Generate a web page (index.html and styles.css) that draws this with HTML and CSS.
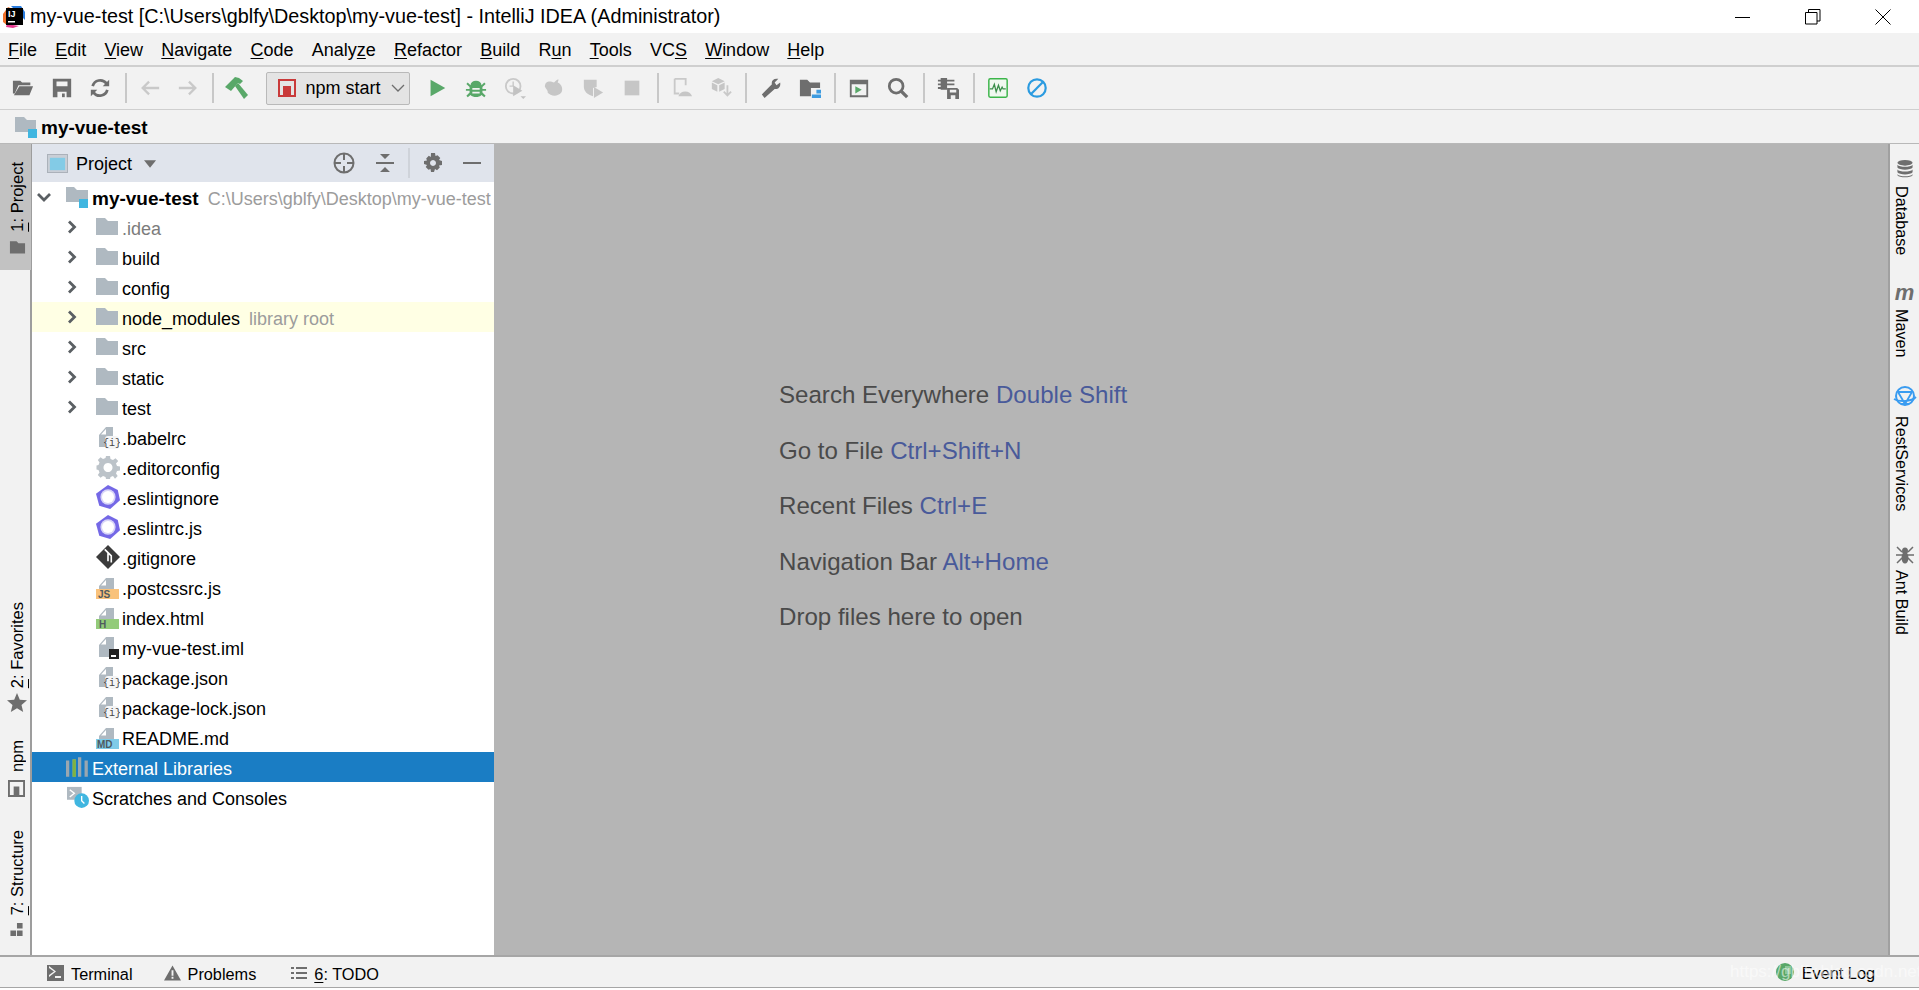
FILE: index.html
```html
<!DOCTYPE html>
<html lang="en">
<head>
<meta charset="utf-8">
<title>my-vue-test - IntelliJ IDEA</title>
<link rel="stylesheet" href="styles.css">
</head>
<body>
<svg class="defs" width="0" height="0">
  <symbol id="folder" viewBox="0 0 22 18"><path d="M0 1h9l3 3h10v14H0z" fill="#afb9c1"/></symbol>
  <symbol id="jsonfile" viewBox="0 0 24 24"><path d="M3 10 10 2h7v20H3z" fill="#afb9c1"/><path d="M5 9.500 10 4v5.500z" fill="#fff"/><rect x="9" y="11" width="14" height="13" rx="3" fill="#f4f5f6"/><text x="16" y="21" class="brace">{i}</text></symbol>
  <symbol id="eslint" viewBox="0 0 22 22"><path d="M11 0 20 4.500 22 14 13 22 3 19 0 8z" fill="#7468e6"/><circle cx="11" cy="11" r="7" fill="#d7d4f7"/><circle cx="11" cy="11" r="5.500" fill="#fff"/></symbol>
  <symbol id="badgefile" viewBox="0 0 24 24"><path d="M3 10 10 2h8v20H3z" fill="#afb9c1"/><path d="M5 9.500 10 4v5.500z" fill="#fff"/></symbol>
  <symbol id="chev" viewBox="0 0 10 14"><path d="M2 1.500 7.500 7 2 12.500" fill="none" stroke="#5a5f63" stroke-width="2.800"/></symbol>
</svg>

<header class="titlebar">
  <svg class="app-logo" viewBox="0 0 22 22"><path d="M0 8 5 1 12 4 5 20 0 16z" fill="#f0712c"/><path d="M8 0h10l4 6v8z" fill="#2a7de0"/><path d="M4 18 16 20 10 22 3 21z" fill="#e6388f"/><rect x="3" y="2" width="17" height="17" fill="#000"/><text x="5" y="11" class="logo-text">IJ</text><rect x="5" y="15" width="7" height="1.500" fill="#fff"/></svg>
  <span class="title-text">my-vue-test [C:\Users\gblfy\Desktop\my-vue-test] - IntelliJ IDEA (Administrator)</span>
  <div class="win-controls">
    <svg class="win-btn" viewBox="0 0 16 16"><path d="M0 8.500h15" stroke="#000" fill="none"/></svg>
    <svg class="win-btn" viewBox="0 0 16 16"><path d="M.5 3.500h11.500v11.500H.5zM3.500 3.500V.5H15V12h-3" stroke="#000" fill="none"/></svg>
    <svg class="win-btn" viewBox="0 0 16 16"><path d="M.5.500l15 15M15.500.500l-15 15" stroke="#000" fill="none"/></svg>
  </div>
</header>

<nav class="menubar">
  <span><u>F</u>ile</span><span><u>E</u>dit</span><span><u>V</u>iew</span><span><u>N</u>avigate</span><span><u>C</u>ode</span><span>Analy<u>z</u>e</span><span><u>R</u>efactor</span><span><u>B</u>uild</span><span>R<u>u</u>n</span><span><u>T</u>ools</span><span>VC<u>S</u></span><span><u>W</u>indow</span><span><u>H</u>elp</span>
</nav>

<div class="toolbar">
  <span class="tool first"><svg viewBox="0 0 24 24" class="ic"><path d="M1 4h8l2 2h9v3H7L3 18H1z" fill="#6e6e6e"/><path d="M8 10h15l-4 10H2z" fill="#6e6e6e"/></svg></span>
  <span class="tool first"><svg viewBox="0 0 24 24" class="ic"><path fill-rule="evenodd" d="M2 2h20v20H2zM6 5v5h12V5zM7 16v6h10v-6z" fill="#6e6e6e"/><path d="M12 18h3v4h-3z" fill="#6e6e6e"/></svg></span>
  <span class="tool first"><svg viewBox="0 0 24 24" class="ic"><path d="M4 10a8.500 8.500 0 0 1 15-3M20 14a8.500 8.500 0 0 1-15 3" fill="none" stroke="#6e6e6e" stroke-width="3"/><path d="M15 10h7V3zM9 14H2v7z" fill="#6e6e6e"/></svg></span>
  <span class="sep"></span>
  <span class="tool first"><svg viewBox="0 0 24 24" class="ic"><path d="M22 12H4M11 5l-7 7 7 7" fill="none" stroke="#c9c9c9" stroke-width="2.500"/></svg></span>
  <span class="tool first"><svg viewBox="0 0 24 24" class="ic"><path d="M2 12h18M13 5l7 7-7 7" fill="none" stroke="#c9c9c9" stroke-width="2.500"/></svg></span>
  <span class="sep"></span>
  <span class="tool first"><svg viewBox="0 0 24 24" class="ic hammer"><path d="M0 11 10 1l4 1 4 3-3 3-2-1-7 8z" fill="#59a869"/><path d="M10 10l3-3 10 12-4 4z" fill="#59a869"/></svg></span>
  <div class="combo">
    <svg viewBox="0 0 18 18" class="combo-ic"><path fill-rule="evenodd" d="M0 0h18v18H0zM2 2v14h3V7h8v9h3V2z" fill="#c93a3a"/><path d="M9 9h2v7H9z" fill="#c93a3a"/></svg>
    <span class="combo-text">npm start</span>
    <svg viewBox="0 0 14 8" class="combo-arrow"><path d="M1 1l6 6 6-6" fill="none" stroke="#6e6e6e" stroke-width="1.300"/></svg>
  </div>
  <span class="tool run"><svg viewBox="0 0 24 24" class="ic"><path d="M5 3l16 9-16 9z" fill="#59a869"/></svg></span>
  <span class="tool"><svg viewBox="0 0 24 24" class="ic"><path fill-rule="evenodd" d="M6 9a6 5 0 0 1 12 0l3-3 1.500 1.500L19 11v2h4v2h-4v2l3.500 3.500L21 22l-3-2.500c-3 3-9 3-12 0L3 22l-1.500-1.500L5 17v-2H1v-2h4v-2L1.500 7.500 3 6zM8 12v2h8v-2zM8 16v2h8v-2z" fill="#59a869"/></svg></span>
  <span class="tool"><svg viewBox="0 0 24 24" class="ic"><circle cx="10" cy="10" r="8" fill="none" stroke="#c9c9c9" stroke-width="2"/><path d="M10 5v5H6" fill="none" stroke="#c9c9c9" stroke-width="1.500"/><path d="M10 9l10 6-10 6zM18 21h6l-3 3z" fill="#c2c2c2"/></svg></span>
  <span class="tool"><svg viewBox="0 0 24 24" class="ic"><path d="M2 10C3 3 9 5 12 6c2-2 4-4 5-3l-1 3c5 2 6 8 4 11-4 5-12 4-15 0 1-2-2-4-3-7z" fill="#c6c6c6"/></svg></span>
  <span class="tool"><svg viewBox="0 0 24 24" class="ic"><path d="M2 3h14v8l-4 1v9C6 19 2 16 2 10z" fill="#c6c6c6"/><path d="M13 11l10 6-10 6z" fill="#c6c6c6"/></svg></span>
  <span class="tool"><svg viewBox="0 0 24 24" class="ic"><rect x="4" y="4" width="16" height="16" fill="#c6c6c6"/></svg></span>
  <span class="sep"></span>
  <span class="tool"><svg viewBox="0 0 24 24" class="ic"><path d="M4 2h12v7M4 2v16h5" fill="none" stroke="#c9c9c9" stroke-width="2"/><path d="M8 21a8 8 0 0 1 15 0z" fill="#c6c6c6"/></svg></span>
  <span class="tool"><svg viewBox="0 0 24 24" class="ic"><path d="M9 1l7 3.500-7 3.500-7-3.500zM2 6l6 3v7l-6-3zM16 6l-6 3v7l6-3z" fill="#c6c6c6"/><path d="M19 9v10M15 16l4 4 4-4" fill="none" stroke="#c9c9c9" stroke-width="2"/></svg></span>
  <span class="sep"></span>
  <span class="tool"><svg viewBox="0 0 24 24" class="ic"><path d="M2 19 13 8c-1-4 2-7 7-6l-4 4 2 3 4-3c1 5-3 8-6 7L5 23z" fill="#6e6e6e"/></svg></span>
  <span class="tool"><svg viewBox="0 0 24 24" class="ic"><path d="M1 3h8l3 3h11v6H13v9H1z" fill="#6e6e6e"/><path d="M19 14h5v4h-5zM14 19h5v4h-5zM19 19h5v4h-5z" fill="#3d9be0"/></svg></span>
  <span class="sep"></span>
  <span class="tool"><svg viewBox="0 0 24 24" class="ic"><path fill-rule="evenodd" d="M2 3h20v19H2zM4 8v12h16V8z" fill="#6e6e6e"/><path d="M8 10l7 4-7 4z" fill="#59a869"/></svg></span>
  <span class="tool"><svg viewBox="0 0 24 24" class="ic"><circle cx="10" cy="10" r="7.500" fill="none" stroke="#6e6e6e" stroke-width="3"/><path d="M15 15l7 7" stroke="#6e6e6e" stroke-width="3.500"/></svg></span>
  <span class="sep"></span>
  <span class="tool"><svg viewBox="0 0 24 24" class="ic"><path d="M4 1h7v13H4zM1 3h3v2H1zM1 7h3v2H1zM1 11h3v2H1zM11 3h8v2h-8zM11 7h8v2h-8z" fill="#6e6e6e"/><path fill-rule="evenodd" d="M11 12h11l2 2v10H11zM14 14v3h7v-3zM15 20v4h5v-4z" fill="#6e6e6e"/></svg></span>
  <span class="sep"></span>
  <span class="tool"><svg viewBox="0 0 24 24" class="ic"><rect x="2" y="2" width="20" height="20" rx="1.500" fill="#f0f8f0" stroke="#3cb54a" stroke-width="1.600"/><path d="M3 13h3l2-5 2 8 2.500-7 2 6 2-4 1 2h3" fill="none" stroke="#3a8f4a" stroke-width="1.400"/></svg></span>
  <span class="tool"><svg viewBox="0 0 24 24" class="ic"><circle cx="12" cy="12" r="9.500" fill="none" stroke="#2b9be0" stroke-width="2.400"/><path d="M5.500 18.500l13-13" stroke="#2b9be0" stroke-width="2.400"/></svg></span>
</div>

<div class="navbar">
  <svg viewBox="0 0 24 24" class="nav-ic"><path d="M1 2h9l3 3h9v12H1z" fill="#afb9c1"/><rect x="14" y="14" width="9" height="9" fill="#40b6e0"/></svg>
  <span class="nav-text">my-vue-test</span>
</div>

<div class="main">
  <aside class="strip strip-left">
    <div class="vtab active">
      <span class="vt-text"><u>1</u>: Project</span>
      <svg viewBox="0 0 18 14" class="vt-ic"><path d="M1 1h7l2 2h7v11H1z" fill="#6e6e6e"/></svg>
    </div>
    <div class="spacer"></div>
    <div class="vtab">
      <span class="vt-text"><u>2</u>: Favorites</span>
      <svg viewBox="0 0 20 20" class="vt-ic star"><path d="M10 0l2.800 6.800 7.200.5-5.500 4.700 1.700 7L10 15.200 3.800 19l1.700-7L0 7.300l7.200-.5z" fill="#6e6e6e"/></svg>
    </div>
    <div class="vtab mt-npm">
      <span class="vt-text">npm</span>
      <svg viewBox="0 0 18 18" class="vt-ic npm"><path fill-rule="evenodd" d="M0 0h18v18H0zM2 2v14h4V7h6v9h4V2z" fill="#6e6e6e"/><path d="M9 9h1.500v7H9z" fill="#6e6e6e"/></svg>
    </div>
    <div class="vtab mt-str">
      <span class="vt-text"><u>7</u>: Structure</span>
      <svg viewBox="0 0 15 15" class="vt-ic str"><path d="M8 0h6v6H8zM1 8h6v6H1zM8 8h6v6H8z" fill="#6e6e6e"/></svg>
    </div>
  </aside>

  <section class="project">
    <div class="proj-head">
      <svg viewBox="0 0 22 20" class="proj-ic"><rect x=".5" y=".5" width="21" height="19" fill="#c9ced6" stroke="#a9b0b8"/><rect x="3" y="4" width="16" height="13" fill="#83cbe6"/></svg>
      <span class="proj-label">Project</span>
      <svg viewBox="0 0 14 8" class="proj-caret"><path d="M0 0h13L6.500 8z" fill="#6e6e6e"/></svg>
      <div class="head-icons">
        <svg viewBox="0 0 22 22" class="hd-ic locate"><circle cx="11" cy="11" r="9.500" fill="none" stroke="#6e6e6e" stroke-width="2"/><path d="M11 2v6M11 14v6M2 11h6M14 11h6" stroke="#6e6e6e" stroke-width="2"/></svg>
        <svg viewBox="0 0 20 20" class="hd-ic collapse"><path d="M1 10h18" stroke="#6e6e6e" stroke-width="2"/><path d="M5 1h10l-5 5zM5 19h10l-5-5z" fill="#6e6e6e"/></svg>
        <span class="hd-sep"></span>
        <svg viewBox="0 0 20 20" class="hd-ic gear"><path fill-rule="evenodd" d="M8 0h4l.5 3 2-.8 2.800 2.800-1.300 2 3 1v4l-3 .5.8 2-2.800 2.800-2-1.300-1 3H8l-.5-3-2 .8-2.800-2.800 1.300-2-3-1V8l3-.5-.8-2L5.800 2.700l2 1.300zM10 7a3 3 0 1 0 .01 0z" fill="#6e6e6e"/></svg>
        <svg viewBox="0 0 20 20" class="hd-ic hide"><path d="M1 10h18" stroke="#6e6e6e" stroke-width="2"/></svg>
      </div>
    </div>
    <div class="tree">
      <div class="row r0">
        <svg viewBox="0 0 14 10" class="chev-down"><path d="M1 2l6 6 6-6" fill="none" stroke="#5a5f63" stroke-width="2.800"/></svg>
        <svg viewBox="0 0 24 22" class="root-ic"><path d="M0 1h8l3 3h11v12H0z" fill="#afb9c1"/><rect x="13" y="13" width="9" height="9" fill="#40b6e0"/></svg>
        <b class="name bold">my-vue-test</b><span class="hint">C:\Users\gblfy\Desktop\my-vue-test</span>
      </div>
      <div class="row r1"><svg class="chev"><use href="#chev"/></svg><svg class="fold"><use href="#folder"/></svg><span class="name dim">.idea</span></div>
      <div class="row r1"><svg class="chev"><use href="#chev"/></svg><svg class="fold"><use href="#folder"/></svg><span class="name">build</span></div>
      <div class="row r1"><svg class="chev"><use href="#chev"/></svg><svg class="fold"><use href="#folder"/></svg><span class="name">config</span></div>
      <div class="row r1 lib"><svg class="chev"><use href="#chev"/></svg><svg class="fold"><use href="#folder"/></svg><span class="name">node_modules</span><span class="hint">library root</span></div>
      <div class="row r1"><svg class="chev"><use href="#chev"/></svg><svg class="fold"><use href="#folder"/></svg><span class="name">src</span></div>
      <div class="row r1"><svg class="chev"><use href="#chev"/></svg><svg class="fold"><use href="#folder"/></svg><span class="name">static</span></div>
      <div class="row r1"><svg class="chev"><use href="#chev"/></svg><svg class="fold"><use href="#folder"/></svg><span class="name">test</span></div>
      <div class="row r2"><svg class="file"><use href="#jsonfile"/></svg><span class="name">.babelrc</span></div>
      <div class="row r2"><svg class="file" viewBox="0 0 24 24"><path fill-rule="evenodd" d="M10 1h4l.5 3 2.500 1 2.500-1.700 2.700 2.700L20 8.500l1 2.500 3 .5v4l-3 .5-1 2.500 1.700 2.500-2.700 2.700L17 21l-2.500 1-.5 2h-4l-.5-2L7 21l-2.500 1.700L1.800 20 3.500 17.500l-1-2.500-2-.5v-4l2-.5 1-2.500L1.800 5l2.700-2.700L7 4l2.500-1zM12 8a4.500 4.500 0 1 0 .01 0z" fill="#bcc3c9"/></svg><span class="name">.editorconfig</span></div>
      <div class="row r2"><svg class="file"><use href="#eslint"/></svg><span class="name">.eslintignore</span></div>
      <div class="row r2"><svg class="file"><use href="#eslint"/></svg><span class="name">.eslintrc.js</span></div>
      <div class="row r2"><svg class="file" viewBox="0 0 22 22"><path d="M11 0l11 11-11 11L0 11z" fill="#3b3b3b"/><path d="M8 4l6 6v6M11 7v8" fill="none" stroke="#fff" stroke-width="1.500"/></svg><span class="name">.gitignore</span></div>
      <div class="row r2"><svg class="file badged" viewBox="0 0 24 24"><path d="M3 10 10 2h8v12H3z" fill="#afb9c1"/><path d="M5 9.500 10 4v5.500z" fill="#fff"/><rect y="13" width="23" height="10" fill="#f9c27b"/><text x="2" y="22" class="badge">JS</text></svg><span class="name">.postcssrc.js</span></div>
      <div class="row r2"><svg class="file badged" viewBox="0 0 24 24"><path d="M3 10 10 2h8v12H3z" fill="#afb9c1"/><path d="M5 9.500 10 4v5.500z" fill="#fff"/><rect y="13" width="23" height="10" fill="#93cb7a"/><text x="3" y="22" class="badge">H</text></svg><span class="name">index.html</span></div>
      <div class="row r2"><svg class="file"><use href="#badgefile"/><rect x="13" y="14" width="10" height="10" fill="#222"/><rect x="15" y="20" width="5" height="2" fill="#fff"/></svg><span class="name">my-vue-test.iml</span></div>
      <div class="row r2"><svg class="file"><use href="#jsonfile"/></svg><span class="name">package.json</span></div>
      <div class="row r2"><svg class="file"><use href="#jsonfile"/></svg><span class="name">package-lock.json</span></div>
      <div class="row r2"><svg class="file badged" viewBox="0 0 24 24"><path d="M3 10 10 2h8v12H3z" fill="#afb9c1"/><path d="M5 9.500 10 4v5.500z" fill="#fff"/><rect y="13" width="23" height="10" fill="#7fcbe8"/><text x="1" y="22" class="badge">MD</text></svg><span class="name">README.md</span></div>
      <div class="row r0 selected">
        <svg viewBox="0 0 22 20" class="root-ic"><path d="M0 4h3v15H0zM6 3h3v16H6zM11 1h3v18h-3zM17 4h3v15h-3z" fill="#9aa7b0"/><path d="M6 3h3v16H6z" fill="#7cb342"/></svg>
        <span class="name">External Libraries</span>
      </div>
      <div class="row r0 scratch">
        <svg viewBox="0 0 24 24" class="root-ic"><path d="M0 1h16v14H0z" fill="#afb9c1"/><path d="M3 4l5 4-5 4" fill="none" stroke="#fff" stroke-width="1.500"/><circle cx="16" cy="16" r="8" fill="#40b6e0"/><path d="M16 11v5l3 3" fill="none" stroke="#fff" stroke-width="1.500"/></svg>
        <span class="name">Scratches and Consoles</span>
      </div>
    </div>
  </section>

  <section class="editor">
    <p class="hint-line">Search Everywhere <span class="key">Double Shift</span></p>
    <p class="hint-line">Go to File <span class="key">Ctrl+Shift+N</span></p>
    <p class="hint-line">Recent Files <span class="key">Ctrl+E</span></p>
    <p class="hint-line">Navigation Bar <span class="key">Alt+Home</span></p>
    <p class="hint-line">Drop files here to open</p>
  </section>

  <aside class="strip strip-right">
    <div class="rtab db">
      <svg viewBox="0 0 18 19" class="rt-ic"><ellipse cx="9" cy="3" rx="8" ry="3" fill="#6e6e6e"/><path d="M1 5c2 3 14 3 16 0v3c-2 3-14 3-16 0zM1 10c2 3 14 3 16 0v3c-2 3-14 3-16 0zM1 15c2 3 14 3 16 0v1c-2 3-14 3-16 0z" fill="#6e6e6e"/></svg>
      <span class="rt-text">Database</span>
    </div>
    <div class="rtab mv">
      <span class="rt-m">m</span>
      <span class="rt-text mv-text">Maven</span>
    </div>
    <div class="rtab rs">
      <svg viewBox="0 0 24 24" class="rt-ic rest"><circle cx="12" cy="10" r="9" fill="none" stroke="#3a9cf0" stroke-width="2"/><path d="M1 13c5 3 17 3 22-2M5 6l7 12 7-12M5 6h14M8 18h8" fill="none" stroke="#3a9cf0" stroke-width="1.800"/></svg>
      <span class="rt-text rest-text">RestServices</span>
    </div>
    <div class="rtab ant">
      <svg viewBox="0 0 18 18" class="rt-ic"><ellipse cx="9" cy="5" rx="3" ry="3.500" fill="#6e6e6e"/><ellipse cx="9" cy="12" rx="3.500" ry="5.500" fill="#6e6e6e"/><path d="M1 1l5 5M17 1l-5 5M0 9h18M1 17l5-5M17 17l-5-5" stroke="#6e6e6e" stroke-width="1.500"/></svg>
      <span class="rt-text ant-text">Ant Build</span>
    </div>
  </aside>
</div>

<footer class="statusbar">
  <div class="st-item"><svg viewBox="0 0 17 16" class="st-ic"><path fill-rule="evenodd" d="M0 0h17v16H0zM2 3l5 3.500L2 10v2l7-5.500L2 1zM8 11v2h6v-2z" fill="#6e6e6e"/></svg><span class="st-text">Terminal</span></div>
  <div class="st-item"><svg viewBox="0 0 18 16" class="st-ic"><path fill-rule="evenodd" d="M9 0l9 16H0zM8 5v6h2V5zM8 12v2h2v-2z" fill="#6e6e6e"/></svg><span class="st-text">Problems</span></div>
  <div class="st-item st-todo"><svg viewBox="0 0 16 14" class="st-ic todo"><path d="M0 1h3v2H0zM5 1h11v2H5zM0 6h3v2H0zM5 6h11v2H5zM0 11h3v2H0zM5 11h11v2H5z" fill="#6e6e6e"/></svg><span class="st-text"><u>6</u>: TODO</span></div>
  <div class="event-log"><svg viewBox="0 0 18 18" class="ev-ic"><circle cx="9" cy="9" r="9" fill="#59a869"/><path d="M9 3h6v8H9z" fill="#8dc79a"/></svg><span class="st-text">Event Log</span></div>
  <span class="watermark">https://gblfy.blog.csdn.net</span>
</footer>
</body>
</html>
```
FILE: styles.css
```css
* { box-sizing: border-box; }
html, body { margin: 0; padding: 0; }
body {
  width: 1919px;
  height: 990px;
  overflow: hidden;
  display: flex;
  flex-direction: column;
  background: #fff;
  font-family: "Liberation Sans", Arial, sans-serif;
  font-size: 18px;
  color: #000;
}
.defs { position: absolute; }
svg { display: block; flex: none; }
u { text-underline-offset: 2px; }

.titlebar { height: 33px; flex: none; display: flex; align-items: center; background: #fff; padding-left: 3px; }
.app-logo { width: 22px; height: 22px; }
.logo-text { font: bold 9px "Liberation Sans", sans-serif; fill: #fff; }
.title-text { margin-left: 5px; font-size: 19.800px; }
.win-controls { margin-left: auto; display: flex; gap: 54px; padding-right: 28px; align-items: center; }
.win-btn { width: 16px; height: 16px; }

.menubar { height: 34px; flex: none; display: flex; align-items: center; gap: 18.200px; padding: 2px 0 0 8px; background: #f2f2f2; border-bottom: 2px solid #cfcfcf; }

.toolbar { height: 43px; flex: none; display: flex; align-items: center; padding-left: 4px; background: #f2f2f2; border-bottom: 1px solid #cfcfcf; }
.tool { width: 39px; height: 38px; display: flex; align-items: center; justify-content: center; }
.tool.first { width: 38.500px; }
.ic { width: 22px; height: 22px; }
.hammer { width: 24px; height: 24px; }
.sep { width: 2px; height: 30px; background: #c8c8c8; margin: 0 3.750px 0 5px; }
.combo { width: 144px; height: 33px; margin-left: 9px; display: flex; align-items: center; padding-left: 11px; background: #e4e4e4; border: 1px solid #b9b9b9; border-radius: 2px; }
.combo-ic { width: 18px; height: 18px; }
.combo-text { margin-left: 10px; }
.combo-arrow { width: 14px; height: 8px; margin-left: 10px; }
.tool.run { margin-left: 8px; }

.navbar { height: 34px; flex: none; display: flex; align-items: center; padding-left: 14px; background: #f2f2f2; border-bottom: 1px solid #b8b8b8; }
.nav-ic { width: 24px; height: 24px; }
.nav-text { font-weight: 700; font-size: 19px; margin-left: 3px; padding-top: 3px; }

.main { flex: 1; display: flex; min-height: 0; border-bottom: 2px solid #a6a6a6; }
.strip { width: 32px; flex: none; background: #f2f2f2; display: flex; flex-direction: column; }
.strip-left { border-right: 2px solid #9d9d9d; }
.vtab { display: flex; flex-direction: column; align-items: center; padding-left: 3px; }
.vtab.active { background: #c2c2c2; height: 126px; padding-top: 18px; margin-right: -1px; }
.spacer { flex: 1; }
.vt-text { writing-mode: vertical-rl; transform: rotate(180deg); font-size: 16.500px; line-height: 20px; }
.vt-ic { width: 17px; height: 14px; margin-top: 8px; }
.star { width: 20px; height: 20px; margin-top: 4px; }
.npm { height: 17px; margin-top: 8px; }
.mt-npm { margin-top: 27px; }
.mt-str { margin-top: 33px; margin-bottom: 18px; }

.project { width: 462px; flex: none; background: #fff; display: flex; flex-direction: column; }
.proj-head { height: 38px; flex: none; display: flex; align-items: center; padding-left: 15px; background: #e0e4ec; }
.proj-ic { width: 21px; height: 19px; }
.proj-label { margin-left: 8px; padding-top: 2px; }
.proj-caret { width: 13px; height: 8px; margin-left: 12px; margin-top: 2px; }
.head-icons { margin-left: auto; display: flex; align-items: center; padding-right: 12px; }
.hd-ic { width: 20px; height: 20px; }
.locate { width: 22px; height: 22px; }
.collapse { margin-left: 20px; }
.hd-sep { width: 2px; height: 30px; background: #cfd3da; margin: 0 13px 0 13px; }
.hide { margin-left: 19px; }

.row { height: 30px; display: flex; align-items: center; white-space: nowrap; }
.r0 { padding-left: 5px; }
.r1 { padding-left: 35px; }
.r2 { padding-left: 64px; }
.chev-down { width: 14px; height: 10px; margin-right: 15px; }
.root-ic { width: 24px; height: 22px; margin-left: 29px; }
.chev-down + .root-ic { margin-left: 0; }
.name { margin-left: 2px; padding-top: 4px; }
.bold { font-size: 19px; }
.chev { width: 10px; height: 14px; }
.fold { width: 22px; height: 18px; margin-left: 19px; margin-bottom: 2px; }
.fold + .name { margin-left: 4px; }
.file { width: 24px; height: 24px; flex: none; }
.badged { margin-top: 2px; }
.r2 .name { margin-left: 2px; }
.brace { font: 10px "Liberation Mono", monospace; fill: #444; text-anchor: middle; }
.badge { font: bold 10px "Liberation Sans", sans-serif; fill: #4f5a5f; }
.dim { color: #7c7c7c; }
.hint { color: #9c9c9c; margin-left: 9px; padding-top: 4px; }
.lib { background: #ffffe4; }
.selected { background: #1a7dc4; color: #fff; }

.editor { flex: 1; background: #b5b5b5; padding: 238px 0 0 285px; }
.hint-line { margin: 0 0 30.500px; font-size: 24.100px; line-height: 25px; color: #4a4a4a; }
.key { color: #495a9a; }

.strip-right { width: 31px; border-left: 2px solid #a0a0a0; padding-top: 16px; align-items: center; }
.rtab { display: flex; flex-direction: column; align-items: center; }
.rt-ic { width: 18px; height: 18px; }
.rt-text { writing-mode: vertical-rl; font-size: 16.200px; line-height: 20px; margin-top: 8px; margin-right: 5px; }
.rt-m { font: italic bold 22px/16px "Liberation Sans", sans-serif; color: #6e6e6e; }
.rest { width: 24px; height: 24px; }
.mv { margin-top: 30px; }
.mv-text { margin-top: 8px; }
.rs { margin-top: 28px; }
.rest-text { margin-top: 6px; }
.ant { margin-top: 35px; }
.ant-text { margin-top: 6px; }

.statusbar { position: relative; height: 31px; flex: none; display: flex; align-items: center; padding-left: 47px; gap: 31px; background: #f2f2f2; border-bottom: 1px solid #a6a6a6; margin-bottom: 2px; }
.st-item { display: flex; align-items: center; gap: 7px; padding-top: 2px; }
.st-todo { margin-left: 4px; }
.st-text { font-size: 16.300px; padding-top: 3px; }
.st-ic { width: 17px; height: 16px; }
.todo { width: 16px; height: 14px; }
.event-log { margin-left: auto; display: flex; align-items: center; gap: 8px; padding-right: 44px; }
.ev-ic { width: 18px; height: 18px; }
.watermark { position: absolute; left: 1730px; top: 5px; font-size: 17px; color: rgba(255, 255, 255, .55); white-space: nowrap; }
```
